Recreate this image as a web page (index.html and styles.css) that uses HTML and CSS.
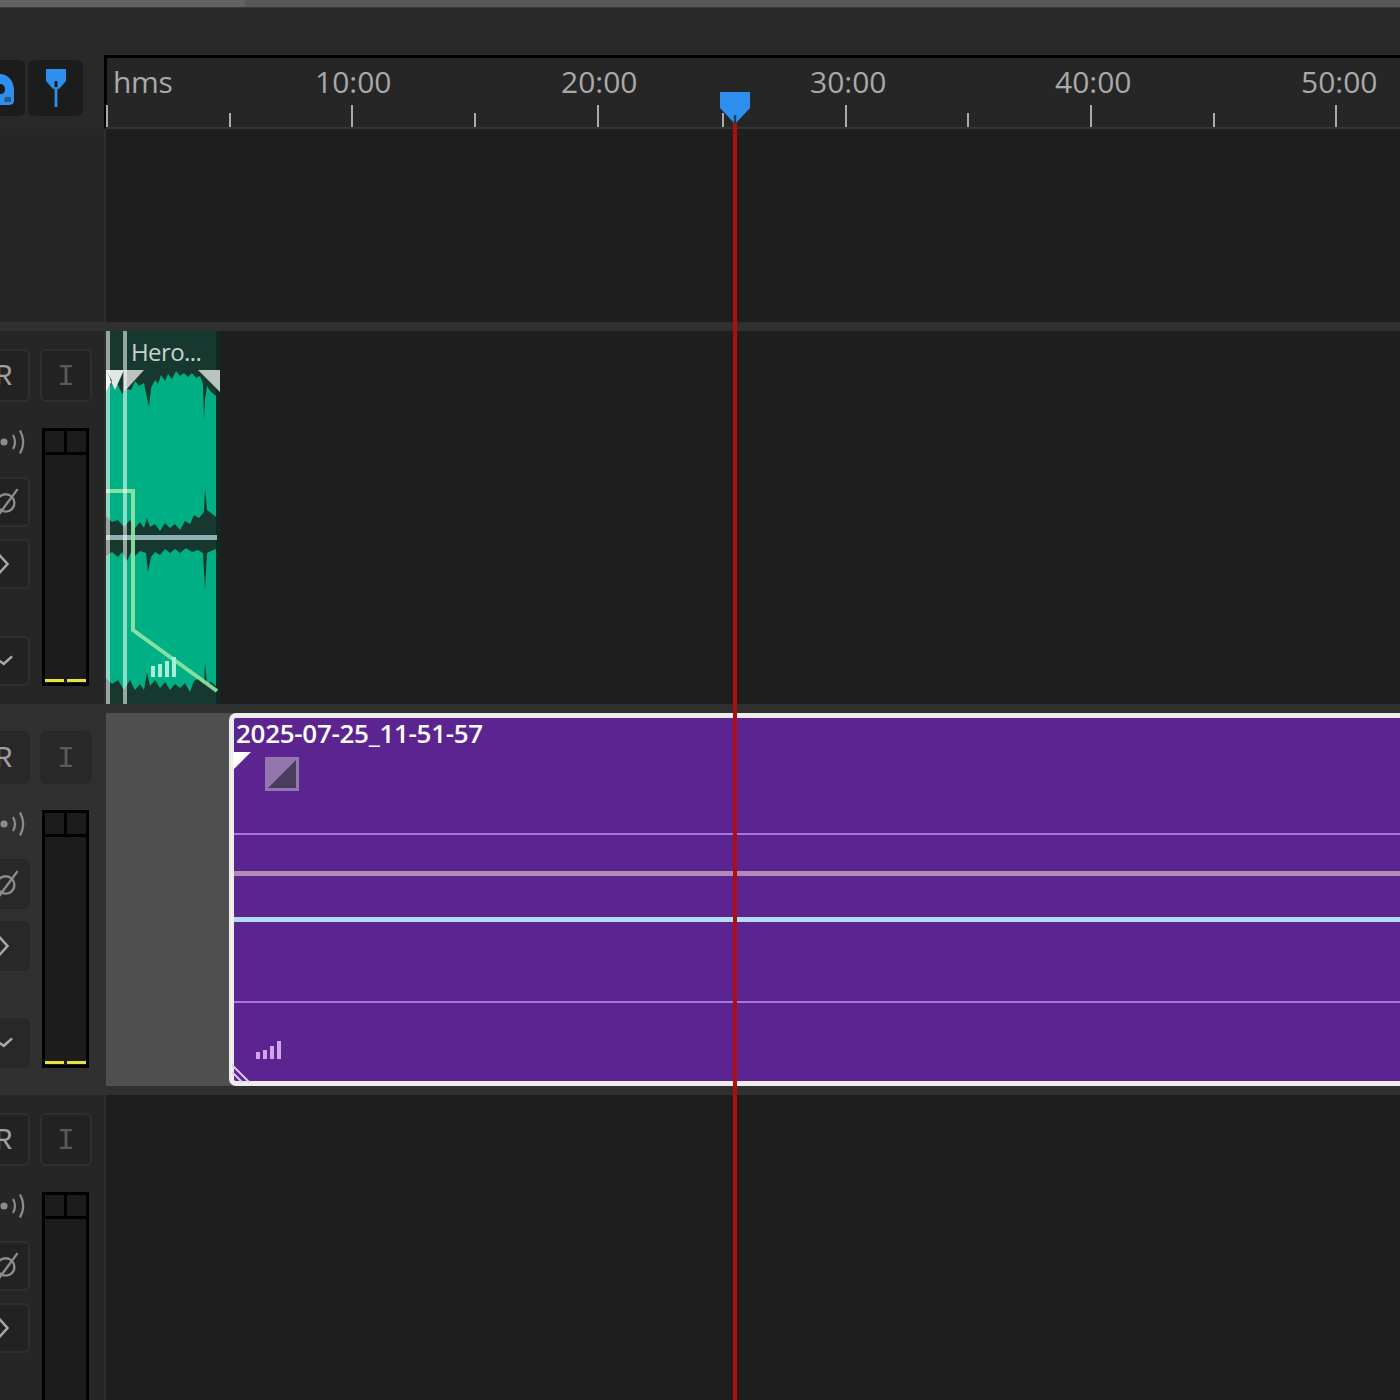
FILE: index.html
```html
<!DOCTYPE html>
<html lang="en">
<head>
<meta charset="utf-8">
<title>Multitrack timeline</title>
<link rel="stylesheet" href="styles.css">
</head>
<body>
<svg class="defs" width="0" height="0" aria-hidden="true">
  <symbol id="i-speak" viewBox="0 0 30 30"><circle cx="4" cy="15" r="3.6" fill="#8c8c8c"/><path d="M13 8q4 7 0 14M20 3.500q6.500 11.500 0 23" fill="none" stroke="#8c8c8c" stroke-width="2.200"/></symbol>
  <symbol id="i-phase" viewBox="0 0 30 50"><circle cx="7" cy="26" r="9.500" fill="none" stroke="#8c8c8c" stroke-width="2.600"/><path d="M0 38 20 11" stroke="#8c8c8c" stroke-width="2.600"/></symbol>
  <symbol id="i-chev" viewBox="0 0 30 50"><path d="M0 15l9 10-9 10" fill="none" stroke="#a8a8a8" stroke-width="2.800"/></symbol>
  <symbol id="i-check" viewBox="0 0 30 50"><path d="M-1 24l6 4 9-8" fill="none" stroke="#a8a8a8" stroke-width="2.800"/></symbol>
</svg>

<div class="app">
  <div class="topline"></div>
  <div class="toolbar"></div>

  <div class="ruler-row">
    <div class="tools">
      <button class="tool" type="button" aria-label="Snap">
        <svg class="magnet" width="24" height="34" viewBox="0 0 24 34"><path d="M0 1C8 1 14 8 14 17V28Q14 32 8 32H0V21C4 21 5 19 5 16 5 13 3 11 0 11Z" fill="#2f8fef"/><path d="M5 24h6v5H4z" fill="#1c1c1c" opacity=".45"/></svg>
      </button>
      <button class="tool marker-tool" type="button" aria-label="Marker">
        <svg width="22" height="40" viewBox="0 0 22 40"><path d="M1 1H21V13L14 21H12.500V13H9.500V21H8L1 13Z" fill="#2f8fef"/><path d="M9.600 19h2.800v20H9.600z" fill="#2f8fef"/></svg>
      </button>
    </div>
    <div class="ruler">
      <span class="label label-hms">hms</span>
      <span class="label" style="left:208px">10:00</span>
      <span class="label" style="left:454px">20:00</span>
      <span class="label" style="left:703px">30:00</span>
      <span class="label" style="left:948px">40:00</span>
      <span class="label" style="left:1194px">50:00</span>
      <i class="tick tall" style="left:-1px"></i>
      <i class="tick" style="left:122px"></i>
      <i class="tick tall" style="left:244px"></i>
      <i class="tick" style="left:367px"></i>
      <i class="tick tall" style="left:490px"></i>
      <i class="tick" style="left:615px"></i>
      <i class="tick tall" style="left:738px"></i>
      <i class="tick" style="left:860px"></i>
      <i class="tick tall" style="left:983px"></i>
      <i class="tick" style="left:1106px"></i>
      <i class="tick tall" style="left:1228px"></i>
    </div>
  </div>

  <section class="row row-empty">
    <div class="head"></div>
    <div class="lane"></div>
  </section>
  <div class="sep"></div>

  <section class="row row-track">
    <div class="head">
      <div class="col-a">
        <div class="btn btn-r">R</div>
        <svg class="ico-speak"><use href="#i-speak"/></svg>
        <div class="btn btn-s btn-first"><svg class="ico"><use href="#i-phase"/></svg></div>
        <div class="btn btn-s"><svg class="ico"><use href="#i-chev"/></svg></div>
        <div class="btn btn-s btn-last"><svg class="ico"><use href="#i-check"/></svg></div>
      </div>
      <div class="col-b">
        <div class="btn btn-i">I</div>
        <div class="meter"><div class="peaks"><b></b><b></b></div><div class="levels"><u></u><u></u></div></div>
      </div>
    </div>
    <div class="lane">
      <div class="clip-green">
        <span class="clip-green-name">Hero...</span>
        <svg class="wave" width="114" height="373" viewBox="106 331 114 373">
          <rect x="106" y="331" width="114" height="373" fill="#17382e"/>
          <rect x="216" y="331" width="4" height="373" fill="#0f2a23"/>
          <path fill="#00b084" d="M106 392 112 383 118 385 122 394 127 389 131 390 135 381 139 386 144 383 147 398 149 407 151 388 155 380 158 384 161 375 165 381 168 374 172 379 176 371 180 376 184 373 188 377 192 373 196 378 200 376 203 384 204 420 205 400 207 386 211 392 216 396 216 517 211 513 207 510 205 488 204 512 199 518 194 515 190 524 185 521 180 530 175 524 170 528 165 523 160 531 155 524 150 527 147 518 144 528 140 522 135 528 130 520 124 527 118 520 112 522 106 516Z"/>
          <path fill="#00b084" d="M106 556 112 552 118 557 122 552 127 561 131 552 135 556 140 551 146 553 148 572 151 557 155 552 160 555 165 549 170 553 175 549 180 553 186 548 192 552 198 550 203 553 205 590 207 553 211 551 216 549 216 686 211 682 207 683 205 662 204 684 199 678 194 681 190 692 185 683 180 688 175 684 170 690 165 682 160 688 155 680 150 686 147 672 144 690 140 684 135 690 130 680 124 690 118 680 112 684 106 678Z"/>
          <path d="M106 535h111v5H106z" fill="#8fb1b4"/>
          <path d="M106 491H133V630L217 691" fill="none" stroke="#93e6a9" stroke-width="4" opacity=".9"/>
          <path d="M106 370h18l-9 20zM106 370v22l6-11z" fill="#e4e6e4"/>
          <path d="M124 370h20l-20 22z" fill="#b9c4bf"/>
          <path d="M198 370h22v22z" fill="#b9c4bf"/>
          <rect x="106" y="331" width="4" height="373" fill="#fff" opacity=".55"/>
          <rect x="123" y="331" width="4" height="373" fill="#fff" opacity=".55"/>
          <path d="M151 666h4v11h-4zM158 664h4v13h-4zM165 661h4v16h-4zM172 657h4v20h-4z" fill="#a8eed8"/>
        </svg>
      </div>
    </div>
  </section>
  <div class="sep"></div>

  <section class="row row-track row-selected">
    <div class="head">
      <div class="col-a">
        <div class="btn btn-r">R</div>
        <svg class="ico-speak"><use href="#i-speak"/></svg>
        <div class="btn btn-s btn-first"><svg class="ico"><use href="#i-phase"/></svg></div>
        <div class="btn btn-s"><svg class="ico"><use href="#i-chev"/></svg></div>
        <div class="btn btn-s btn-last"><svg class="ico"><use href="#i-check"/></svg></div>
      </div>
      <div class="col-b">
        <div class="btn btn-i">I</div>
        <div class="meter"><div class="peaks"><b></b><b></b></div><div class="levels"><u></u><u></u></div></div>
      </div>
    </div>
    <div class="lane">
      <div class="clip-purple">
        <span class="clip-purple-name">2025-07-25_11-51-57</span>
        <svg class="clip-fade" width="18" height="18" viewBox="0 0 18 18"><path d="M0 0H18L0 18Z" fill="#fff"/></svg>
        <svg class="clip-swatch" width="34" height="34" viewBox="0 0 34 34"><rect width="34" height="34" fill="#9376ad"/><path d="M31 3V31H3Z" fill="#4a3d5c"/></svg>
        <i class="line line-a"></i>
        <i class="line line-b"></i>
        <i class="line line-c"></i>
        <i class="line line-d"></i>
        <svg class="clip-bars" width="28" height="20" viewBox="0 0 28 20"><path d="M1 12h4v7H1zM8 10h4v9H8zM15 6h4v13h-4zM22 1h4v18h-4z" fill="#cfa6ee"/></svg>
        <svg class="clip-corner" width="20" height="20" viewBox="0 0 20 20"><path d="M0 2 17 19M0 9 10 19" stroke="#d8c8ea" stroke-width="2"/></svg>
      </div>
    </div>
  </section>
  <div class="sep"></div>

  <section class="row row-track">
    <div class="head">
      <div class="col-a">
        <div class="btn btn-r">R</div>
        <svg class="ico-speak"><use href="#i-speak"/></svg>
        <div class="btn btn-s btn-first"><svg class="ico"><use href="#i-phase"/></svg></div>
        <div class="btn btn-s"><svg class="ico"><use href="#i-chev"/></svg></div>
        <div class="btn btn-s btn-last"><svg class="ico"><use href="#i-check"/></svg></div>
      </div>
      <div class="col-b">
        <div class="btn btn-i">I</div>
        <div class="meter"><div class="peaks"><b></b><b></b></div><div class="levels"><u></u><u></u></div></div>
      </div>
    </div>
    <div class="lane"></div>
  </section>

  <div class="playhead">
    <svg class="playhead-cap" width="32" height="34" viewBox="0 0 32 34"><path d="M1 1H31V17L16 33 1 17Z" fill="#2f8fef"/><path d="M14.800 24h2.400v9h-2.400z" fill="#1c3a5c"/></svg>
  </div>
</div>
</body>
</html>
```

FILE: styles.css
```css
* { box-sizing: border-box; }
html, body { margin: 0; padding: 0; background: #262626; }
.defs { position: absolute; }

.app {
  position: relative;
  width: 1400px;
  height: 1400px;
  overflow: hidden;
  display: flex;
  flex-direction: column;
  background: #262626;
  font-family: "Open Sans", "Noto Sans", sans-serif;
}

.topline {
  flex: 0 0 8px;
  background: linear-gradient(90deg, #626262 245px, #585858 245px);
  border-bottom: 1px solid #3a3a3a;
}
.toolbar { flex: 0 0 47px; background: #292929; }

.ruler-row { flex: 0 0 74px; display: flex; background: #292929; }
.tools {
  flex: 0 0 104px;
  display: flex;
  justify-content: flex-end;
  align-items: flex-start;
  gap: 3px;
  padding: 5px 21px 0 0;
  overflow: hidden;
}
.tool {
  flex: 0 0 55px;
  height: 56px;
  padding: 0;
  border: 0;
  border-radius: 6px;
  background: #1c1c1c;
  display: flex;
  align-items: center;
  justify-content: flex-start;
}
.magnet { margin-left: 30px; margin-top: 4px; }
.marker-tool { padding: 0 0 0 17px; }

.ruler {
  position: relative;
  flex: 1;
  background: #262626;
  border-top: 3px solid #000;
  border-left: 3px solid #000;
  border-bottom: 2px solid #343434;
}
.label {
  position: absolute;
  top: 4px;
  font-size: 30px;
  font-weight: 500;
  line-height: 40px;
  color: #a9a9a9;
  white-space: nowrap;
}
.label-hms { left: 6px; letter-spacing: -0.3px; }
.tick { position: absolute; bottom: 0; width: 2px; height: 14px; background: #a9a9a9; }
.tick.tall { height: 22px; }

.row { display: flex; background: #262626; }
.row-empty { flex: 0 0 193px; }
.row-track { flex: 0 0 373px; }
.row-selected { background: #303030; }
.sep { flex: 0 0 9px; background: #303030; }

.head {
  flex: 0 0 106px;
  display: grid;
  grid-template-columns: 30px 62px;
  column-gap: 10px;
  align-content: start;
  padding-top: 18px;
  border-right: 2px solid #2e2e2e;
  overflow: hidden;
}
.row-empty .head { display: block; }
.row-selected .head { border-right-color: #303030; }
.lane { position: relative; flex: 1; background: #1e1e1e; overflow: hidden; }
.row-selected .lane { background: #4f4f4f; }

.col-a { display: flex; flex-direction: column; align-items: flex-end; }
.col-b { display: flex; flex-direction: column; align-items: flex-start; }

.btn {
  display: flex;
  align-items: center;
  justify-content: center;
  background: #222;
  border: 2px solid #2f2f2f;
  border-radius: 6px;
  font-family: "Liberation Mono", "DejaVu Sans Mono", monospace;
}
.row-selected .btn { background: #282828; border-color: #282828; }
.btn-r {
  width: 60px;
  height: 53px;
  padding: 3px 0 0 23px;
  font-size: 29px;
  color: #a0a0a0;
  justify-content: flex-start;
}
.btn-i { width: 52px; height: 53px; padding-top: 3px; font-size: 29px; color: #5a5a5a; }
.btn-s { width: 60px; height: 50px; margin-top: 12px; justify-content: flex-end; padding: 0; }
.btn-first { margin-top: 20px; }
.btn-last { margin-top: 47px; }
.ico { width: 30px; height: 46px; }
.ico-speak { width: 30px; height: 30px; margin-top: 25px; }

.meter {
  width: 47px;
  height: 258px;
  margin: 26px 0 0 2px;
  display: flex;
  flex-direction: column;
  justify-content: space-between;
  background: #1c1c1c;
  border: 3px solid #000;
}
.peaks { display: flex; height: 24px; border-bottom: 3px solid #000; }
.peaks b { flex: 1; }
.peaks b + b { border-left: 3px solid #000; }
.levels { display: flex; gap: 3px; padding-bottom: 1px; }
.levels u { flex: 1; height: 3px; background: #e7e23c; text-decoration: none; }

.clip-green { position: relative; width: 114px; height: 373px; }
.wave { display: block; }
.clip-green-name {
  position: absolute;
  z-index: 1;
  left: 25px;
  top: 5px;
  font-size: 24px;
  line-height: 32px;
  letter-spacing: -0.6px;
  color: #c9d2ce;
}

.clip-purple {
  position: absolute;
  left: 123px;
  top: 0;
  right: -12px;
  height: 373px;
  background: #5b2490;
  border: 5px solid #ececec;
  border-radius: 7px;
}
.clip-purple-name {
  position: absolute;
  left: 2px;
  top: -1px;
  font-size: 26px;
  font-weight: 600;
  line-height: 32px;
  letter-spacing: -0.3px;
  color: #fff;
  white-space: nowrap;
}
.clip-fade { position: absolute; left: -1px; top: 34px; }
.clip-swatch { position: absolute; left: 31px; top: 39px; }
.clip-bars { position: absolute; left: 21px; bottom: 21px; }
.clip-corner { position: absolute; left: -2px; bottom: -2px; }
.line { position: absolute; left: 0; right: 0; }
.line-a { top: 115px; height: 2px; background: #a877dc; }
.line-b { top: 153px; height: 5px; background: #b08bb5; }
.line-c { top: 199px; height: 5px; background: #b5dcf6; }
.line-d { top: 283px; height: 2px; background: #a877dc; }

.playhead {
  position: absolute;
  left: 733px;
  top: 122px;
  bottom: 0;
  width: 4px;
  background: #b30c0c;
}
.playhead-cap { position: absolute; left: -14px; top: -31px; }
```
